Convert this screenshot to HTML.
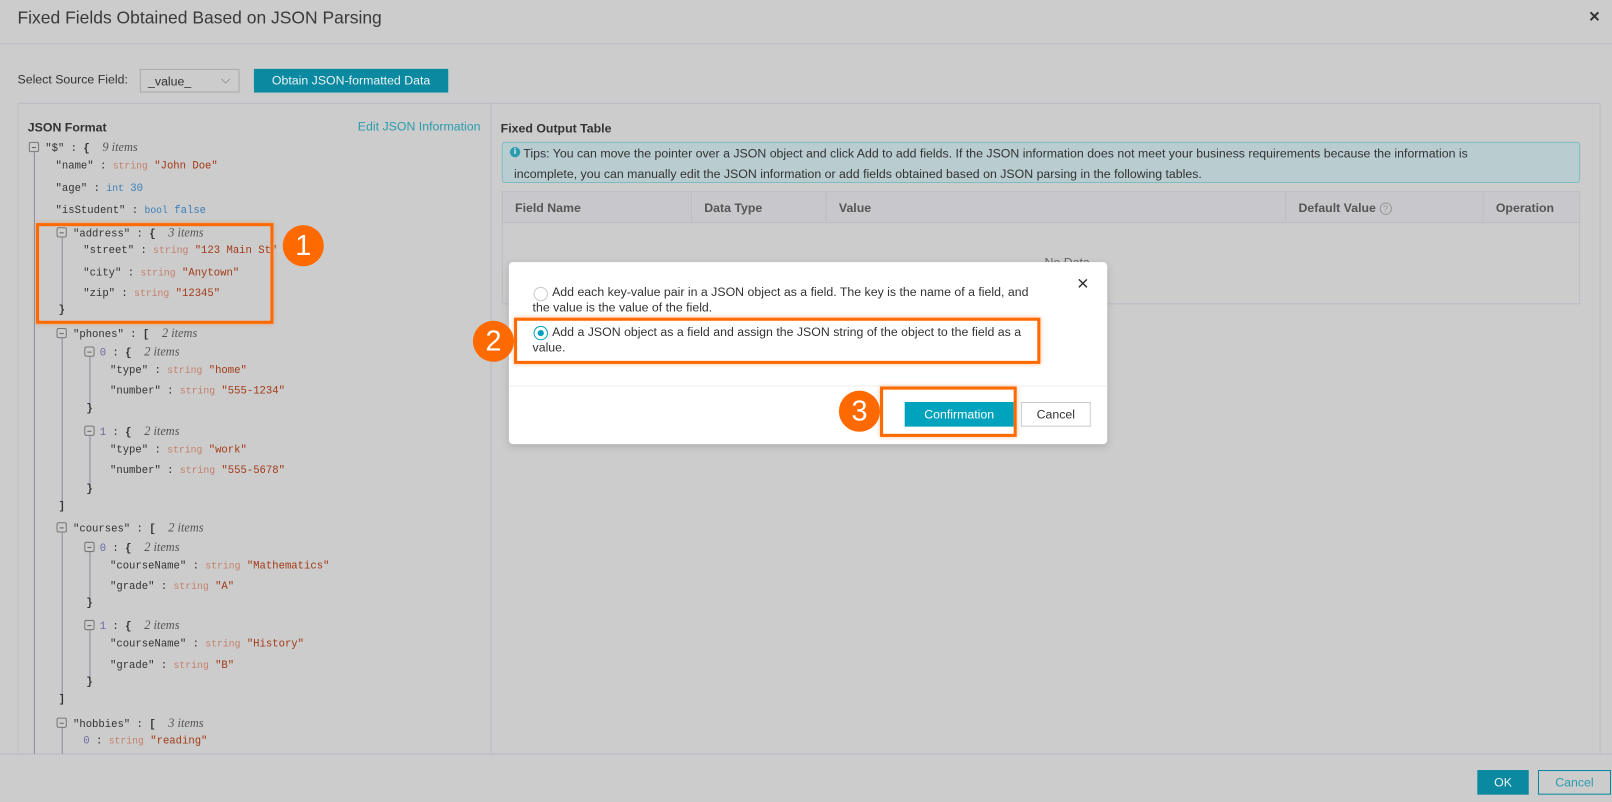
<!DOCTYPE html>
<html><head><meta charset="utf-8"><style>
*{box-sizing:border-box;margin:0;padding:0}
body{width:1612px;height:802px;background:#cccccc;font-family:"Liberation Sans",sans-serif;position:relative;overflow:hidden;color:#333}
#w{position:absolute;left:0;top:0;width:1568px;height:780px;transform:scale(1.02806);transform-origin:0 0}
.a{position:absolute;white-space:nowrap}
.j{position:absolute;white-space:nowrap;font-family:"Liberation Mono",monospace;font-size:10.3px;color:#333;line-height:14px}
.t{color:#c4806a;font-size:9.5px}
.v{color:#a23a16}
.n{color:#3a7fb8}
.i{font-style:italic;color:#555;font-family:"Liberation Serif",serif;font-size:12px}
.ix{color:#6a6aa8}
.tg{position:absolute;width:10px;height:10px;border:1px solid #777;border-radius:2px;background:#ccc}
.tg:after{content:"";position:absolute;left:2px;right:2px;top:4px;height:1px;background:#666}
.vl{position:absolute;width:1px;background:#8a8ca0}
.badge{position:absolute;width:40px;height:40px;border-radius:50%;background:#ff6a00;color:#fff;font-size:28px;text-align:center;line-height:40px}
.ob{position:absolute;border:3px solid #ff6a00;box-shadow:0 0 4px rgba(255,106,0,.4)}
th{font-weight:bold;font-size:12px;color:#555;text-align:left;padding-left:12px;border-right:1px solid #bcbcc6;height:30px}
</style></head><body><div id="w">
<div class="a" style="left:17px;top:8px;font-size:17px;color:#3a3a3a">Fixed Fields Obtained Based on JSON Parsing</div>
<div class="a" style="left:1545px;top:8px;font-size:14px;color:#333;font-weight:bold">✕</div>
<div class="a" style="left:0;top:42px;width:1568px;height:1px;background:#bdbdc8"></div>
<div class="a" style="left:17px;top:70px;font-size:12px;color:#333">Select Source Field:</div>
<div class="a" style="left:136px;top:67px;width:97px;height:23px;border:1px solid #aaa;font-size:12px;padding:4px 0 0 7px">_value_<span style="position:absolute;right:8px;top:2px;color:#777">⌵</span></div>
<div class="a" style="left:247px;top:67px;width:189px;height:23px;background:#0b89a0;color:#e8f4f6;font-size:12px;text-align:center;line-height:23px">Obtain JSON-formatted Data</div>

<div class="a" style="left:17px;top:100px;width:1540px;height:634px;border:1px solid #bcbcc6"></div>
<div class="a" style="left:477px;top:100px;width:1px;height:634px;background:#bcbcc6"></div>
<div class="a" style="left:0;top:733px;width:1568px;height:1px;background:#bcbcc6"></div>

<div class="a" style="left:27px;top:117px;font-size:12px;font-weight:bold;color:#333">JSON Format</div>
<div class="a" style="left:348px;top:116px;font-size:12px;color:#2a9cae">Edit JSON Information</div>

<div class="vl" style="left:33px;top:148px;height:585px"></div>
<div class="vl" style="left:60px;top:230px;height:70px"></div>
<div class="vl" style="left:60px;top:328px;height:160px"></div>
<div class="vl" style="left:87px;top:346px;height:50px"></div>
<div class="vl" style="left:87px;top:423px;height:50px"></div>
<div class="vl" style="left:60px;top:517px;height:160px"></div>
<div class="vl" style="left:87px;top:536px;height:50px"></div>
<div class="vl" style="left:87px;top:612px;height:50px"></div>
<div class="vl" style="left:60px;top:707px;height:26px"></div>

<div class="tg" style="left:28px;top:138px"></div>
<div class="j" style="left:44px;top:136px">"$" : <b>{</b> &nbsp;<span class="i">9 items</span></div>
<div class="j" style="left:54px;top:155px">"name" : <span class="t">string</span> <span class="v">"John Doe"</span></div>
<div class="j" style="left:54px;top:177px">"age" : <span class="t n">int</span> <span class="n">30</span></div>
<div class="j" style="left:54px;top:198px">"isStudent" : <span class="t n">bool</span> <span class="n">false</span></div>
<div class="tg" style="left:55px;top:221px"></div>
<div class="j" style="left:71px;top:219px">"address" : <b>{</b> &nbsp;<span class="i">3 items</span></div>
<div class="j" style="left:81px;top:237px">"street" : <span class="t">string</span> <span class="v">"123 Main St"</span></div>
<div class="j" style="left:81px;top:259px">"city" : <span class="t">string</span> <span class="v">"Anytown"</span></div>
<div class="j" style="left:81px;top:279px">"zip" : <span class="t">string</span> <span class="v">"12345"</span></div>
<div class="j" style="left:57px;top:295px"><b>}</b></div>
<div class="tg" style="left:55px;top:319px"></div>
<div class="j" style="left:71px;top:317px">"phones" : <b>[</b> &nbsp;<span class="i">2 items</span></div>
<div class="tg" style="left:82px;top:337px"></div>
<div class="j" style="left:97px;top:335px"><span class="ix">0</span> : <b>{</b> &nbsp;<span class="i">2 items</span></div>
<div class="j" style="left:107px;top:354px">"type" : <span class="t">string</span> <span class="v">"home"</span></div>
<div class="j" style="left:107px;top:374px">"number" : <span class="t">string</span> <span class="v">"555-1234"</span></div>
<div class="j" style="left:84px;top:391px"><b>}</b></div>
<div class="tg" style="left:82px;top:414px"></div>
<div class="j" style="left:97px;top:412px"><span class="ix">1</span> : <b>{</b> &nbsp;<span class="i">2 items</span></div>
<div class="j" style="left:107px;top:431px">"type" : <span class="t">string</span> <span class="v">"work"</span></div>
<div class="j" style="left:107px;top:451px">"number" : <span class="t">string</span> <span class="v">"555-5678"</span></div>
<div class="j" style="left:84px;top:469px"><b>}</b></div>
<div class="j" style="left:57px;top:486px"><b>]</b></div>
<div class="tg" style="left:55px;top:508px"></div>
<div class="j" style="left:71px;top:506px">"courses" : <b>[</b> &nbsp;<span class="i">2 items</span></div>
<div class="tg" style="left:82px;top:527px"></div>
<div class="j" style="left:97px;top:525px"><span class="ix">0</span> : <b>{</b> &nbsp;<span class="i">2 items</span></div>
<div class="j" style="left:107px;top:544px">"courseName" : <span class="t">string</span> <span class="v">"Mathematics"</span></div>
<div class="j" style="left:107px;top:564px">"grade" : <span class="t">string</span> <span class="v">"A"</span></div>
<div class="j" style="left:84px;top:580px"><b>}</b></div>
<div class="tg" style="left:82px;top:603px"></div>
<div class="j" style="left:97px;top:601px"><span class="ix">1</span> : <b>{</b> &nbsp;<span class="i">2 items</span></div>
<div class="j" style="left:107px;top:620px">"courseName" : <span class="t">string</span> <span class="v">"History"</span></div>
<div class="j" style="left:107px;top:641px">"grade" : <span class="t">string</span> <span class="v">"B"</span></div>
<div class="j" style="left:84px;top:657px"><b>}</b></div>
<div class="j" style="left:57px;top:674px"><b>]</b></div>
<div class="tg" style="left:55px;top:698px"></div>
<div class="j" style="left:71px;top:696px">"hobbies" : <b>[</b> &nbsp;<span class="i">3 items</span></div>
<div class="j" style="left:81px;top:714px;height:19px;overflow:hidden"><span class="ix">0</span> : <span class="t">string</span> <span class="v">"reading"</span></div>

<div class="ob" style="left:35px;top:217px;width:231px;height:98px"></div>
<div class="badge" style="left:275px;top:219px">1</div>

<div class="a" style="left:487px;top:118px;font-size:12px;font-weight:bold;color:#333">Fixed Output Table</div>
<div class="a" style="left:488px;top:138px;width:1049px;height:40px;border:1px solid #80bcc4;border-radius:3px;background:#b9ccd0;font-size:12px;color:#333;line-height:20px;white-space:normal">
<span style="position:absolute;left:7px;top:4px;width:10px;height:10px;border-radius:50%;background:#2a9cae;color:#fff;font-size:8px;text-align:center;line-height:10px;font-weight:bold">i</span>
<div style="position:absolute;left:11px;top:0;width:960px;text-indent:9px">Tips: You can move the pointer over a JSON object and click Add to add fields. If the JSON information does not meet your business requirements because the information is incomplete, you can manually edit the JSON information or add fields obtained based on JSON parsing in the following tables.</div></div>
<table class="a" style="left:488px;top:186px;width:1049px;border-collapse:collapse;border:1px solid #bcbcc6;background:#c8c8cc">
<tr><th style="width:184px">Field Name</th><th style="width:131px">Data Type</th><th style="width:447px">Value</th><th style="width:192px">Default Value <span style="display:inline-block;width:12px;height:12px;border:1px solid #999;border-radius:50%;font-size:9px;text-align:center;line-height:10px;color:#999;font-weight:normal">?</span></th><th style="border-right:0">Operation</th></tr></table>
<div class="a" style="left:488px;top:217px;width:1049px;height:79px;border:1px solid #bcbcc6;border-top:0"></div>
<div class="a" style="left:1016px;top:248px;font-size:12px;color:#666">No Data</div>

<div class="a" style="left:495px;top:255px;width:582px;height:177px;background:#fff;border-radius:4px;box-shadow:0 2px 8px rgba(0,0,0,.15)">
<div class="a" style="left:552px;top:12px;font-size:15px;color:#333">✕</div>
<div class="a" style="left:24px;top:24px;width:14px;height:14px;border:1px solid #c8c8d0;border-radius:50%"></div>
<div class="a" style="left:23px;top:22px;width:500px;font-size:12px;color:#333;white-space:normal;line-height:15px;text-indent:19px">Add each key-value pair in a JSON object as a field. The key is the name of a field, and the value is the value of the field.</div>
<div class="a" style="left:24px;top:62px;width:14px;height:14px;border:1px solid #00a0bd;border-radius:50%"><div style="margin:3px;width:6px;height:6px;border-radius:50%;background:#00a0bd"></div></div>
<div class="a" style="left:23px;top:61px;width:480px;font-size:12px;color:#333;white-space:normal;line-height:15px;text-indent:19px">Add a JSON object as a field and assign the JSON string of the object to the field as a value.</div>
<div class="a" style="left:0;top:120px;width:582px;height:1px;background:#eee"></div>
<div class="a" style="left:385px;top:136px;width:106px;height:24px;background:#00a3bd;color:#fff;font-size:12px;text-align:center;line-height:24px">Confirmation</div>
<div class="a" style="left:498px;top:136px;width:68px;height:24px;border:1px solid #ccc;color:#333;font-size:12px;text-align:center;line-height:22px">Cancel</div>
</div>
<div class="ob" style="left:500px;top:309px;width:512px;height:45px"></div>
<div class="badge" style="left:460px;top:312px">2</div>
<div class="ob" style="left:856px;top:376px;width:133px;height:49px"></div>
<div class="badge" style="left:816px;top:380px">3</div>

<div class="a" style="left:1437px;top:749px;width:50px;height:24px;background:#0b89a0;color:#e8f4f6;font-size:12px;text-align:center;line-height:24px">OK</div>
<div class="a" style="left:1496px;top:749px;width:71px;height:24px;border:1px solid #0b89a0;color:#2a9cae;font-size:12px;text-align:center;line-height:22px">Cancel</div>
</div></body></html>
